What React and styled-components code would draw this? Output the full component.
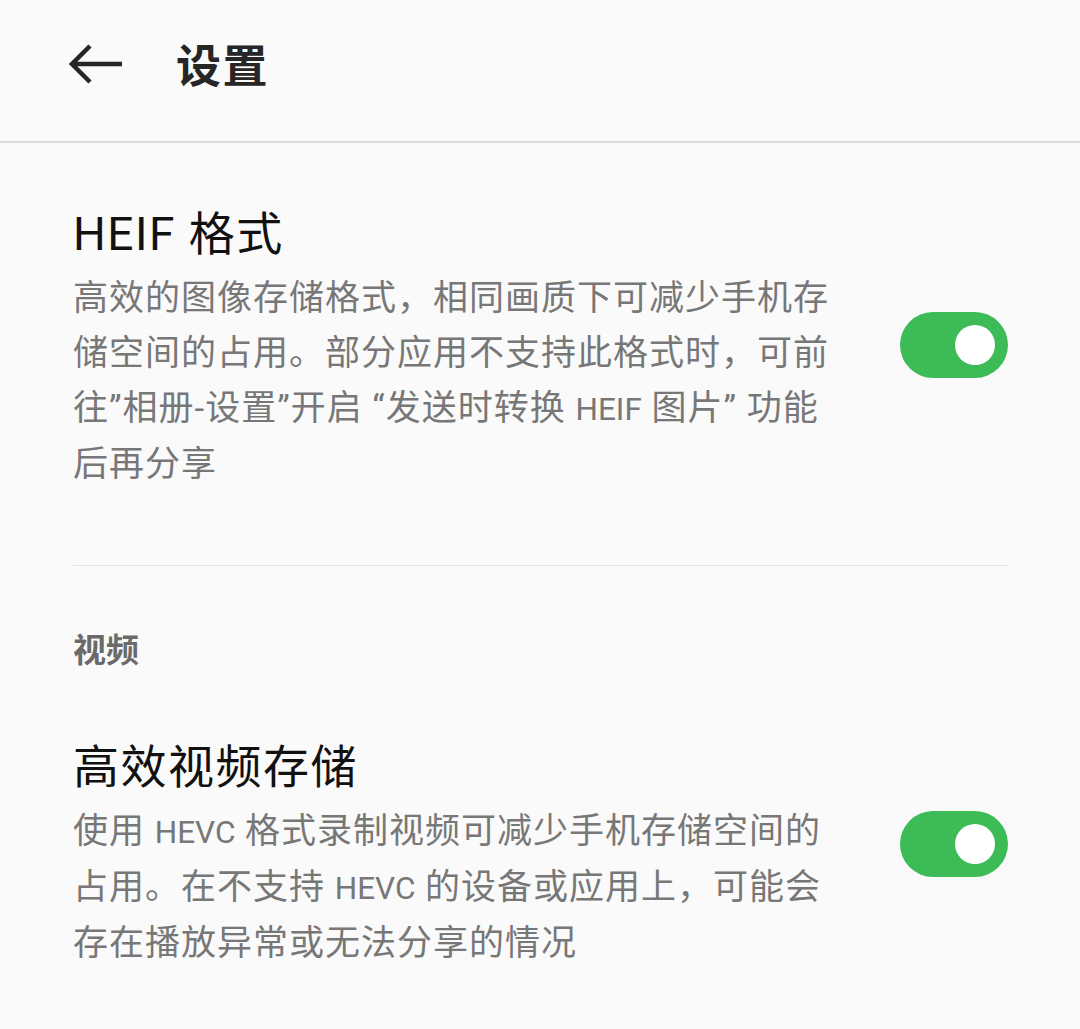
import React, { useState } from "react";
import styled, { createGlobalStyle } from "styled-components";

const Global = createGlobalStyle`
  html, body {
    margin: 0;
    padding: 0;
    background: #fafafa;
  }
  body {
    font-family: "Noto Sans CJK SC", "Noto Sans", sans-serif;
    -webkit-font-smoothing: antialiased;
  }
`;

const Page = styled.div`
  width: 1080px;
  min-height: 1029px;
  background: #fafafa;
  display: flex;
  flex-direction: column;
`;

const Header = styled.header`
  height: 143px;
  display: flex;
  align-items: center;
  gap: 52px;
  padding: 0 0 14px 68px;
  box-sizing: border-box;
  border-bottom: 2px solid #dcdcdc;
`;

const BackButton = styled.button`
  border: 0;
  background: none;
  padding: 0;
  width: 56px;
  height: 44px;
  display: flex;
  align-items: center;
  color: #262626;
  cursor: pointer;
`;

const HeaderTitle = styled.h1`
  margin: 0;
  font-size: 45px;
  font-weight: 700;
  color: #262626;
  letter-spacing: 1.5px;
`;

const Content = styled.main`
  display: flex;
  flex-direction: column;
  padding: 0 72px 0 73px;
`;

const Row = styled.div`
  display: flex;
  align-items: center;
  justify-content: space-between;
  padding: ${(p) => p.$pad};
`;

const TextCol = styled.div`
  display: flex;
  flex-direction: column;
  width: 780px;
`;

const Title = styled.div`
  font-family: Roboto, "Noto Sans CJK SC", sans-serif;
  font-size: 46px;
  line-height: 62px;
  letter-spacing: 1.5px;
  color: #111;
  font-weight: 400;
  margin-bottom: 6px;
`;

const Desc = styled.div`
  font-family: Roboto, "Noto Sans CJK SC", sans-serif;
  font-size: 35px;
  line-height: 55px;
  color: #777;
  letter-spacing: 1px;
  white-space: nowrap;
`;

const Line = styled.span`
  display: block;
`;

/* Latin words inside Chinese copy run a size smaller, like the system font */
const Latin = styled.span`
  font-size: 0.9em;
  letter-spacing: 0;
`;

const Divider = styled.hr`
  margin: 0;
  border: 0;
  border-top: 1.5px solid #e2e2e2;
`;

const SectionLabel = styled.div`
  font-size: 33px;
  font-weight: 700;
  color: #6a6a6a;
  padding: 62px 0 0;
  line-height: 40px;
`;

const Track = styled.button`
  width: 108px;
  height: 66px;
  border-radius: 33px;
  border: 0;
  padding: 0 13px;
  margin-bottom: ${(p) => p.$lift}px;
  background: ${(p) => (p.$on ? "#3cbb57" : "#c8c8c8")};
  display: flex;
  align-items: center;
  justify-content: ${(p) => (p.$on ? "flex-end" : "flex-start")};
  flex-shrink: 0;
  cursor: pointer;
`;

const Knob = styled.span`
  width: 40px;
  height: 40px;
  border-radius: 50%;
  background: #fff;
`;

function Toggle({ initial, lift = 0 }) {
  const [on, setOn] = useState(initial);
  return (
    <Track $on={on} $lift={lift} onClick={() => setOn(!on)} aria-pressed={on}>
      <Knob />
    </Track>
  );
}

function SettingRow({ title, lines, pad, lift }) {
  return (
    <Row $pad={pad}>
      <TextCol>
        <Title>{title}</Title>
        <Desc>
          {lines.map((l, i) => (
            <Line key={i}>{l}</Line>
          ))}
        </Desc>
      </TextCol>
      <Toggle initial lift={lift} />
    </Row>
  );
}

export default function App() {
  return (
    <Page>
      <Global />
      <Header>
        <BackButton aria-label="返回">
          <svg width="56" height="44" viewBox="0 0 56 44" fill="none">
            <path
              d="M54 22H5M22 4L4 22l18 18"
              stroke="currentColor"
              strokeWidth="4.5"
              strokeLinecap="butt"
            />
          </svg>
        </BackButton>
        <HeaderTitle>设置</HeaderTitle>
      </Header>
      <Content>
        <SettingRow
          pad="60px 0 73px"
          lift={6}
          title="HEIF 格式"
          lines={[
            "高效的图像存储格式，相同画质下可减少手机存",
            "储空间的占用。部分应用不支持此格式时，可前",
            <>
              往”相册-设置”开启 “发送时转换 <Latin>HEIF</Latin> 图片” 功能
            </>,
            "后再分享",
          ]}
        />
        <Divider />
        <SectionLabel>视频</SectionLabel>
        <SettingRow
          pad="68px 0 0"
          lift={20}
          title="高效视频存储"
          lines={[
            <>
              使用 <Latin>HEVC</Latin> 格式录制视频可减少手机存储空间的
            </>,
            <>
              占用。在不支持 <Latin>HEVC</Latin> 的设备或应用上，可能会
            </>,
            "存在播放异常或无法分享的情况",
          ]}
        />
      </Content>
    </Page>
  );
}
